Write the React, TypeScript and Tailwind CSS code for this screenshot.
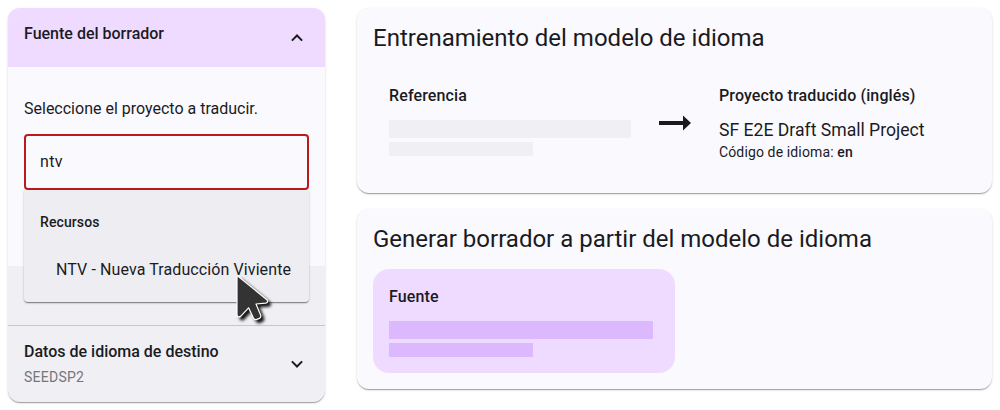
const elevation =
  'shadow-[0_2px_1px_-1px_rgba(0,0,0,0.2),0_1px_1px_0_rgba(0,0,0,0.14),0_1px_3px_0_rgba(0,0,0,0.12)]';

function Chevron({ up = false }: { up?: boolean }) {
  return (
    <svg width="12" height="8" viewBox="0 0 12 8" className="shrink-0" fill="none" stroke="#1a1b1f" strokeWidth="2">
      <path d={up ? 'M0.9 6.6 L6 1.5 L11.1 6.6' : 'M0.9 1.4 L6 6.5 L11.1 1.4'} />
    </svg>
  );
}

function Cursor() {
  return (
    <svg
      width="50"
      height="60"
      viewBox="0 0 50 60"
      className="pointer-events-none absolute left-[205px] top-[79px] overflow-visible drop-shadow-[3px_3px_1.5px_rgba(0,0,0,0.9)]"
    >
      <path
        d="M8 9 Q8 6.6 10 8 L38.2 31 Q39.4 33.6 36.6 34.2 L27 35 L31.8 46.6 Q32 48.6 30.4 49.4 L27.2 50.6 Q25.2 50.8 24.4 49 L19.6 38.8 L11.6 47.4 Q8.6 48.8 8 46 Z"
        fill="#333333"
        stroke="#ffffff"
        strokeWidth="1.2"
        strokeLinejoin="round"
      />
    </svg>
  );
}

function Placeholder({ wide, tone }: { wide: string; tone: string }) {
  return (
    <div className="flex flex-col gap-1">
      <div className={`h-[18px] ${wide} ${tone}`} />
      <div className={`h-[14px] w-36 ${tone}`} />
    </div>
  );
}

export default function App() {
  return (
    <div className="flex h-[410px] w-[1000px] items-start gap-8 overflow-hidden bg-white p-2 font-['Roboto',sans-serif] text-[#1a1b1f]">
      <aside className={`flex h-[394px] w-[317px] shrink-0 flex-col rounded-xl bg-[#f0eff4] ${elevation}`}>
        <header className="flex h-[59px] shrink-0 items-center justify-between rounded-t-xl bg-[#efdbff] pl-4 pr-[22px]">
          <h2 className="-mt-[7px] text-base leading-6 font-medium">Fuente del borrador</h2>
          <Chevron up />
        </header>
        <section className="h-[199px] shrink-0 bg-[#faf9fe] px-4 pt-[30px]">
          <p className="text-base leading-6">Seleccione el proyecto a traducir.</p>
          <div className="relative mt-[13px]">
            <div className="flex h-14 w-[285px] items-center rounded border-2 border-[#ba1a1a] pl-3.5">
              <span className="text-base leading-6 tracking-[0.3px]">ntv</span>
            </div>
            <div className="absolute top-14 left-0 z-10 h-28 w-[285px] rounded-b bg-[#eeedf2] shadow-[0_2px_1px_-1px_rgba(0,0,0,0.3),0_1px_2px_0_rgba(0,0,0,0.3)]">
              <div className="flex h-12 items-center pt-4 pl-4 text-sm font-medium tracking-[0.1px]">Recursos</div>
              <div className="mt-2 flex h-12 items-center pl-8 text-base tracking-[0.1px] whitespace-nowrap">
                NTV - Nueva Traducción Viviente
              </div>
              <Cursor />
            </div>
          </div>
        </section>
        <div className="h-[59px] shrink-0" />
        <section className="flex flex-1 items-center justify-between border-t border-[#c5c6d0] pr-[22px] pl-4">
          <div className="pb-0.5">
            <h2 className="text-base leading-6 font-medium">Datos de idioma de destino</h2>
            <p className="mt-[3px] text-sm leading-5 tracking-[0.25px] text-[#75757a]">SEEDSP2</p>
          </div>
          <Chevron />
        </section>
      </aside>
      <main className="flex w-[635px] shrink-0 flex-col gap-4">
        <section className={`h-[185px] rounded-xl bg-[#faf9fe] px-4 pt-3.5 ${elevation}`}>
          <h1 className="text-2xl leading-8">Entrenamiento del modelo de idioma</h1>
          <div className="mt-[30px] flex pl-4">
            <div className="w-[270px]">
              <h3 className="mb-3 text-base leading-6 font-medium tracking-[0.12px]">Referencia</h3>
              <Placeholder wide="w-[242px]" tone="bg-[#f0eff4]" />
            </div>
            <svg width="32" height="16" viewBox="0 0 32 16" className="mt-[31px] shrink-0" fill="#1a1b1f">
              <path d="M0 6 H24 V0.5 L32 8 L24 15.5 V10 H0 Z" />
            </svg>
            <div className="pl-7">
              <h3 className="text-base leading-6 font-medium tracking-[0.12px]">Proyecto traducido (inglés)</h3>
              <p className="mt-2.5 text-[17.6px] leading-6">SF E2E Draft Small Project</p>
              <p className="text-sm leading-5 tracking-[0.13px]">
                Código de idioma: <span className="font-medium">en</span>
              </p>
            </div>
          </div>
        </section>
        <section className={`h-[180px] rounded-xl bg-[#faf9fe] px-4 pt-3.5 ${elevation}`}>
          <h1 className="text-2xl leading-8">Generar borrador a partir del modelo de idioma</h1>
          <div className="mt-3.5 h-[104px] w-[302px] rounded-2xl bg-[#efdbff] px-4 pt-4">
            <h3 className="mb-3 text-base leading-6 font-medium tracking-[0.12px]">Fuente</h3>
            <Placeholder wide="w-[264px]" tone="bg-[#dcb8ff]" />
          </div>
        </section>
      </main>
    </div>
  );
}
